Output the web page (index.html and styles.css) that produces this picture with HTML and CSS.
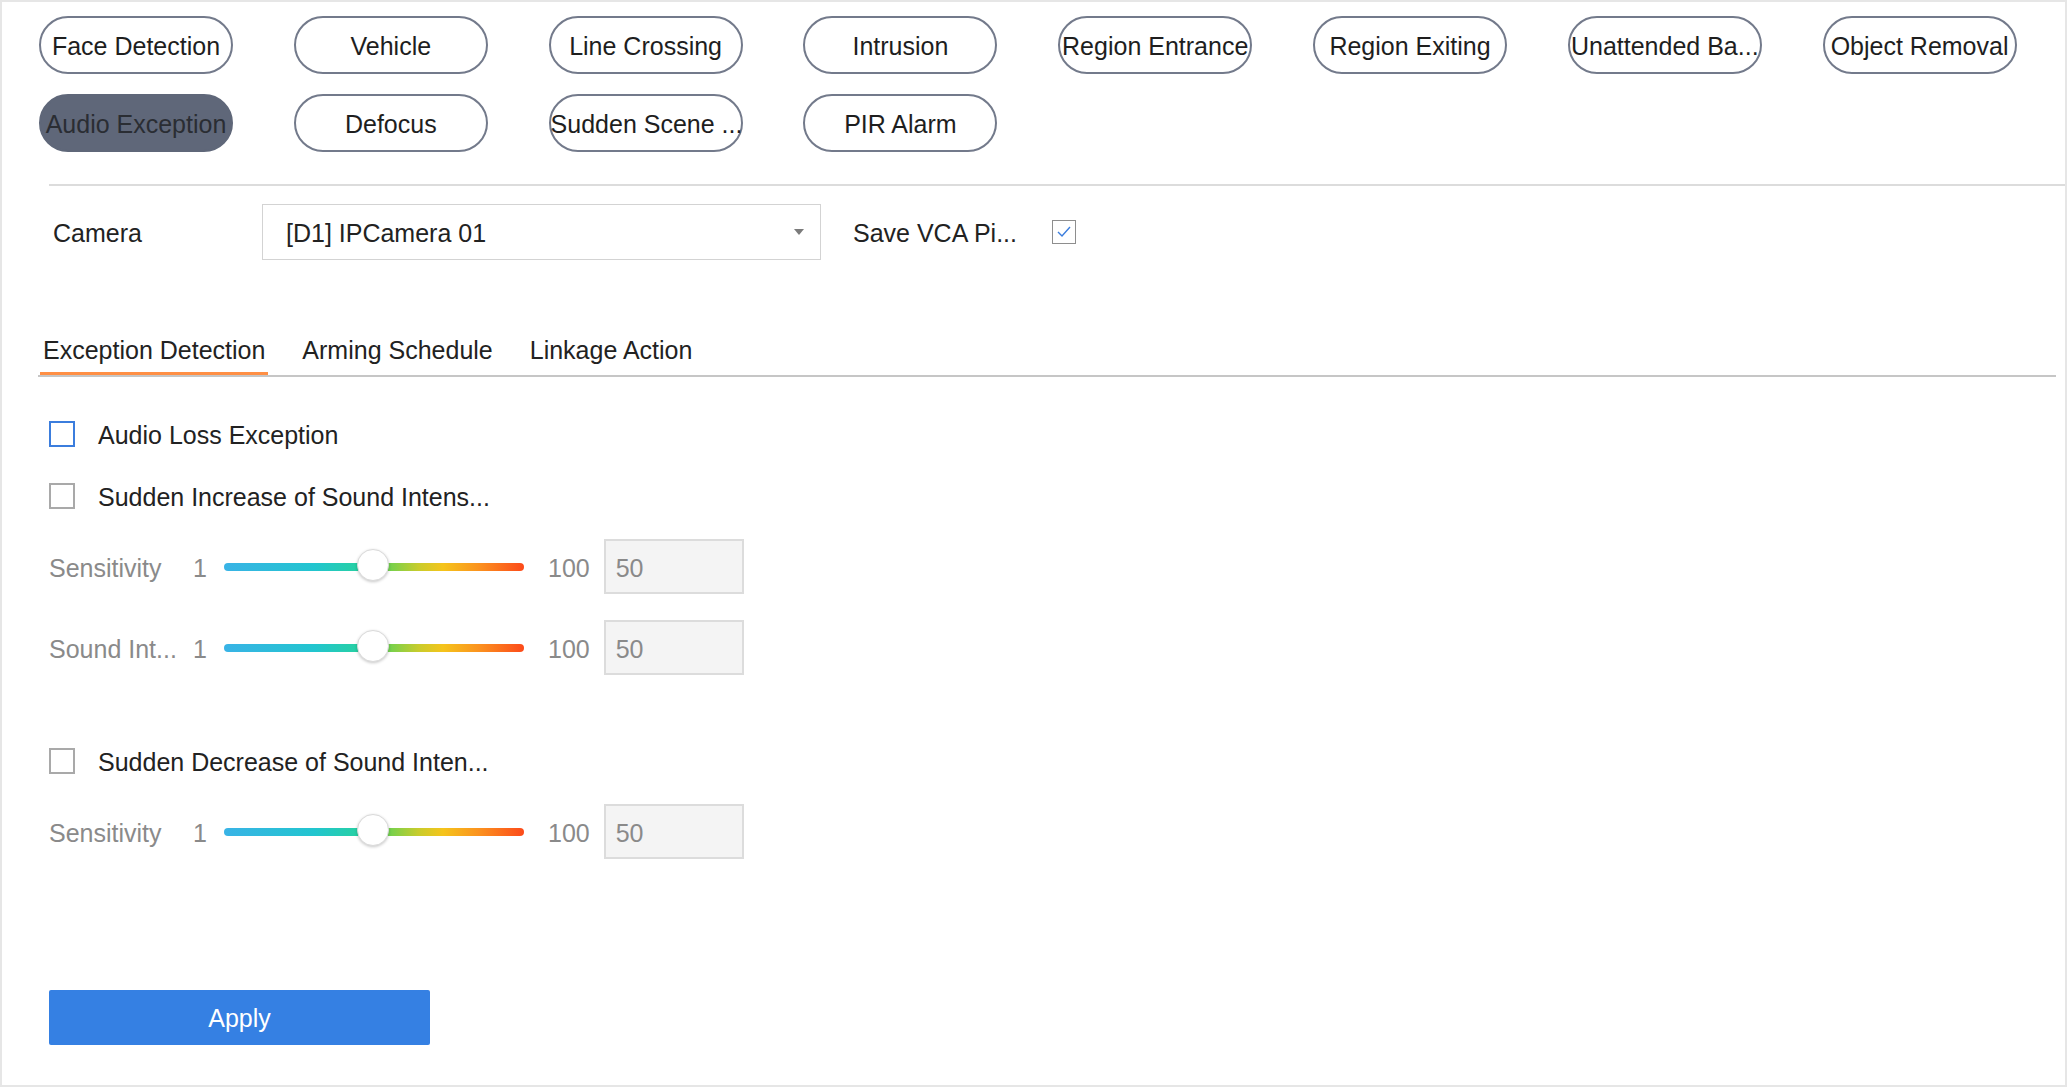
FILE: index.html
```html
<!DOCTYPE html>
<html lang="en">
<head>
<meta charset="utf-8">
<title>Exception Detection</title>
<link rel="stylesheet" href="styles.css">
</head>
<body>
<div class="frame">
  <div class="pills">
    <button class="pill">Face Detection</button>
    <button class="pill">Vehicle</button>
    <button class="pill">Line Crossing</button>
    <button class="pill">Intrusion</button>
    <button class="pill">Region Entrance</button>
    <button class="pill">Region Exiting</button>
    <button class="pill">Unattended Ba...</button>
    <button class="pill">Object Removal</button>
    <button class="pill pill-active">Audio Exception</button>
    <button class="pill">Defocus</button>
    <button class="pill">Sudden Scene ...</button>
    <button class="pill">PIR Alarm</button>
  </div>

  <div class="rule"></div>

  <div class="camera-row">
    <span class="camera-label">Camera</span>
    <div class="select">
      <span>[D1] IPCamera 01</span>
      <span class="caret"></span>
    </div>
    <span class="save-label">Save VCA Pi...</span>
    <span class="check-small">
      <svg width="16" height="14" viewBox="0 0 16 14"><polyline points="2,7 6,11 14,2" fill="none" stroke="#3b7ddd" stroke-width="1.4"/></svg>
    </span>
  </div>

  <div class="tabs">
    <span class="tab tab-active">Exception Detection</span>
    <span class="tab">Arming Schedule</span>
    <span class="tab">Linkage Action</span>
  </div>

  <div class="option option-first">
    <span class="box box-focus"></span>
    <span class="option-text">Audio Loss Exception</span>
  </div>
  <div class="option option-second">
    <span class="box"></span>
    <span class="option-text">Sudden Increase of Sound Intens...</span>
  </div>

  <div class="slider-row slider-first">
    <span class="slider-label">Sensitivity</span>
    <span class="bound">1</span>
    <div class="track"><span class="thumb" style="left: 148.5px"></span></div>
    <span class="bound bound-max">100</span>
    <div class="value">50</div>
  </div>
  <div class="slider-row slider-next">
    <span class="slider-label">Sound Int...</span>
    <span class="bound">1</span>
    <div class="track"><span class="thumb" style="left: 148.5px"></span></div>
    <span class="bound bound-max">100</span>
    <div class="value">50</div>
  </div>

  <div class="option option-third">
    <span class="box"></span>
    <span class="option-text">Sudden Decrease of Sound Inten...</span>
  </div>

  <div class="slider-row slider-first">
    <span class="slider-label">Sensitivity</span>
    <span class="bound">1</span>
    <div class="track"><span class="thumb" style="left: 148.5px"></span></div>
    <span class="bound bound-max">100</span>
    <div class="value">50</div>
  </div>

  <button class="apply">Apply</button>
</div>
</body>
</html>
```

FILE: styles.css
```css
html, body {
  margin: 0;
  padding: 0;
}

body {
  background: #e6e6e6;
  font-family: "Liberation Sans", Arial, sans-serif;
  font-size: 25px;
  color: #222;
}

.frame {
  margin: 2px;
  width: 2063px;
  height: 1083px;
  background: #fff;
  overflow: hidden;
}

/* event type selector */
.pills {
  display: grid;
  grid-template-columns: repeat(8, 194px);
  grid-auto-rows: 58px;
  column-gap: 60.8px;
  row-gap: 20px;
  padding: 14px 0 0 37px;
}

.pill {
  box-sizing: border-box;
  height: 58px;
  border: 2px solid #737a8b;
  border-radius: 29px;
  background: #fff;
  font-family: inherit;
  font-size: 25px;
  color: #1e1e1e;
  padding: 3px 0 0;
  white-space: nowrap;
  overflow: visible;
  text-align: center;
}

.pill-active {
  background: #5f6779;
  border-color: #5f6779;
  color: #2a2d33;
}

.rule {
  margin: 32px 0 0 47px;
  height: 2px;
  background: #dcdcdc;
}

/* camera row */
.camera-row {
  display: flex;
  align-items: center;
  height: 55px;
  margin: 18px 0 0 51px;
}

.camera-label,
.save-label {
  padding-top: 4px;
}

.camera-label {
  width: 209px;
}

.select {
  box-sizing: border-box;
  width: 559px;
  height: 56px;
  border: 1px solid #d3d3d3;
  display: flex;
  align-items: center;
  justify-content: space-between;
  padding: 4px 16px 0 23px;
}

.caret {
  width: 0;
  height: 0;
  border-left: 5px solid transparent;
  border-right: 5px solid transparent;
  border-top: 6px solid #7b7b7b;
  margin-top: -4px;
}

.save-label {
  margin-left: 32px;
}

.check-small {
  box-sizing: border-box;
  margin-left: 35px;
  width: 24px;
  height: 24px;
  border: 1px solid #8e8e8e;
  display: flex;
  align-items: center;
  justify-content: center;
}

/* tabs */
.tabs {
  display: flex;
  gap: 31px;
  margin: 75px 9px 0 36px;
  padding-left: 2px;
  border-bottom: 2px solid #c6c6c6;
}

.tab {
  line-height: 30px;
  padding: 1px 3px 7px;
  border-bottom: 3px solid transparent;
}

.tab-active {
  border-bottom-color: #ff8f45;
}

/* checkbox options */
.option {
  display: flex;
  align-items: center;
  height: 30px;
  margin-left: 47px;
  gap: 23px;
}

.option-text {
  padding-top: 3px;
}

.option-first { margin-top: 42px; }
.option-second { margin-top: 32px; }
.option-third { margin-top: 71px; }

.box {
  box-sizing: border-box;
  width: 26px;
  height: 26px;
  border: 2px solid #a9a9a9;
}

.box-focus {
  border-color: #3b7ddd;
}

/* sliders */
.slider-row {
  display: flex;
  align-items: center;
  height: 55px;
  margin-left: 47px;
  color: #8a8a8a;
}

.slider-first { margin-top: 28px; }
.slider-next { margin-top: 26px; }

.slider-label,
.bound {
  padding-top: 3px;
}

.slider-label {
  width: 144px;
  white-space: nowrap;
}

.bound {
  width: 31px;
}

.bound-max {
  width: auto;
  margin-left: 24px;
  margin-right: 14px;
}

.track {
  position: relative;
  width: 300px;
  height: 8px;
  border-radius: 4px;
  background: linear-gradient(90deg, #39b3e6 0%, #22c5cf 30%, #27d0a3 45%, #72d14e 55%, #c9cc2c 65%, #f5c41b 73%, #fb921f 85%, #fc4a1a 100%);
}

.thumb {
  position: absolute;
  top: 50%;
  width: 32px;
  height: 32px;
  margin: -18px 0 0 -16px;
  box-sizing: border-box;
  border-radius: 50%;
  background: #fff;
  border: 1px solid #dadada;
  box-shadow: 0 1px 3px rgba(0, 0, 0, 0.22);
}

.value {
  box-sizing: border-box;
  width: 140px;
  height: 55px;
  background: #f4f4f4;
  border: 2px solid #dcdcdc;
  padding: 3px 0 0 10px;
  display: flex;
  align-items: center;
  color: #8a8a8a;
}

.apply {
  display: block;
  margin: 131px 0 0 47px;
  width: 381px;
  height: 55px;
  border: none;
  border-radius: 2px;
  background: #3580e3;
  color: #fff;
  font-family: inherit;
  font-size: 25px;
  padding-top: 3px;
}
```
